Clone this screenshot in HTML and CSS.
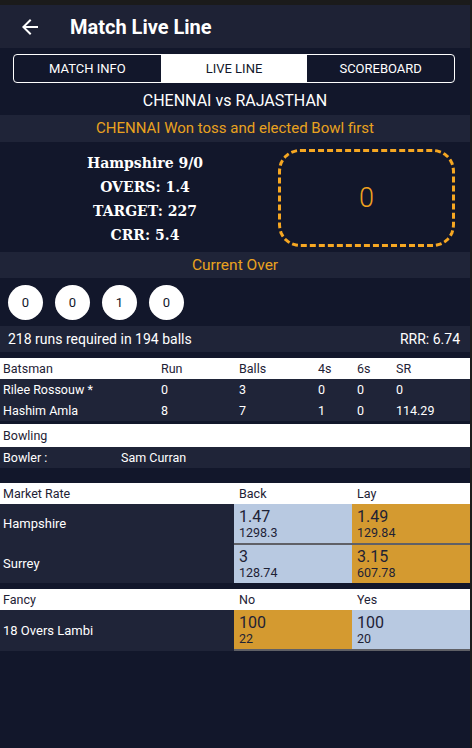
FILE: index.html
```html
<!DOCTYPE html>
<html>
<head>
<meta charset="utf-8">
<link rel="stylesheet" href="styles.css">
</head>
<body>
<div class="app">
  <header class="topbar">
    <svg class="back-icon" viewBox="0 0 24 24" width="24" height="24"><path fill="#fff" d="M20 11H7.83l5.59-5.59L12 4l-8 8 8 8 1.41-1.41L7.83 13H20v-2z"/></svg>
    <h1 class="title">Match Live Line</h1>
  </header>

  <nav class="tabs">
    <div class="tab">MATCH INFO</div>
    <div class="tab active">LIVE LINE</div>
    <div class="tab">SCOREBOARD</div>
  </nav>

  <div class="match-name">CHENNAI vs RAJASTHAN</div>
  <div class="bar toss">CHENNAI Won toss and elected Bowl first</div>

  <section class="score">
    <div class="score-info">
      <div>Hampshire 9/0</div>
      <div>OVERS: 1.4</div>
      <div>TARGET: 227</div>
      <div>CRR: 5.4</div>
    </div>
    <div class="ball-box">0</div>
  </section>

  <div class="bar over-title">Current Over</div>
  <div class="balls">
    <span class="ball">0</span>
    <span class="ball">0</span>
    <span class="ball">1</span>
    <span class="ball">0</span>
  </div>
  <div class="bar required">
    <span>218 runs required in 194 balls</span>
    <span>RRR: 6.74</span>
  </div>

  <div class="tbl bat">
    <div class="row head"><span>Batsman</span><span>Run</span><span>Balls</span><span>4s</span><span>6s</span><span>SR</span></div>
    <div class="row"><span>Rilee Rossouw *</span><span>0</span><span>3</span><span>0</span><span>0</span><span>0</span></div>
    <div class="row"><span>Hashim Amla</span><span>8</span><span>7</span><span>1</span><span>0</span><span>114.29</span></div>
  </div>

  <div class="tbl bowl">
    <div class="row head"><span>Bowling</span></div>
    <div class="row"><span>Bowler :</span><span>Sam Curran</span></div>
  </div>

  <div class="tbl market">
    <div class="row head"><span>Market Rate</span><span>Back</span><span>Lay</span></div>
    <div class="row odds">
      <span class="team">Hampshire</span>
      <div class="cell back"><b>1.47</b><small>1298.3</small></div>
      <div class="cell lay"><b>1.49</b><small>129.84</small></div>
    </div>
    <div class="row odds">
      <span class="team">Surrey</span>
      <div class="cell back"><b>3</b><small>128.74</small></div>
      <div class="cell lay"><b>3.15</b><small>607.78</small></div>
    </div>
  </div>

  <div class="tbl fancy">
    <div class="row head"><span>Fancy</span><span>No</span><span>Yes</span></div>
    <div class="row odds">
      <span class="team">18 Overs Lambi</span>
      <div class="cell lay"><b>100</b><small>22</small></div>
      <div class="cell back"><b>100</b><small>20</small></div>
    </div>
  </div>
</div>
</body>
</html>
```

FILE: styles.css
```css
html {
  background: #1b1b1b;
}
body {
  margin: 5px 2px 0 0;
  font-family: Roboto, "Liberation Sans", sans-serif;
  color: #fff;
}
.app {
  background: #12172b;
  min-height: 743px;
}
.topbar {
  height: 43px;
  background: #1e2235;
  display: flex;
  align-items: center;
  padding-left: 18px;
}
.back-icon {
  display: block;
}
.title {
  margin: 0 0 0 28px;
  font-size: 20px;
  font-weight: 700;
}
.tabs {
  margin: 6px 15px 0 13px;
  height: 27px;
  border: 1px solid #fff;
  border-radius: 4px;
  display: grid;
  grid-template-columns: 1fr 1fr 1fr;
  overflow: hidden;
  background: #12172b;
}
.tab {
  display: flex;
  align-items: center;
  justify-content: center;
  font-size: 13px;
  color: #fff;
}
.tab.active {
  background: #fff;
  color: #12172b;
}
.match-name {
  text-align: center;
  font-size: 16px;
  height: 32px;
  line-height: 36px;
}
.bar {
  background: #1f2438;
}
.toss {
  height: 27px;
  line-height: 27px;
  text-align: center;
  color: #e9a21f;
  font-size: 15px;
}
.score {
  display: grid;
  grid-template-columns: 1fr 177px;
  padding: 7px 15px 9px 0;
  height: 94px;
}
.score-info {
  padding-left: 12px;
  text-align: center;
  font-family: "DejaVu Serif", serif;
  font-weight: 700;
  font-size: 14px;
  line-height: 24px;
  padding-top: 2px;
}
.ball-box {
  border: 3px dashed #f6a722;
  border-radius: 22px;
  display: flex;
  align-items: center;
  justify-content: center;
  color: #f0a21f;
  font-size: 27px;
  font-weight: 300;
}
.over-title {
  height: 26px;
  line-height: 27px;
  text-align: center;
  color: #e9a21f;
  font-size: 15.5px;
}
.balls {
  display: flex;
  gap: 12px;
  padding: 7px 8px 6px;
}
.ball {
  width: 35px;
  height: 35px;
  border-radius: 50%;
  background: #fff;
  color: #12172b;
  font-size: 13px;
  display: flex;
  align-items: center;
  justify-content: center;
}
.required {
  height: 26px;
  display: flex;
  align-items: center;
  justify-content: space-between;
  padding: 0 10px 0 8px;
  font-size: 14px;
}
.tbl {
  margin-top: 6px;
  font-size: 12.5px;
}
.row {
  display: grid;
  background: #1f2438;
  color: #fff;
  align-items: center;
}
.row > span {
  padding-left: 3px;
}
.row.head {
  background: #fff;
  color: #1e2235;
}
.bat .row {
  grid-template-columns: 158px 78px 79px 39px 39px 1fr;
  height: 21px;
}
.bowl {
  margin-top: 3px;
}
.bowl .row {
  grid-template-columns: 118px 1fr;
  height: 21px;
}
.bowl .row.head {
  height: 23px;
  grid-template-columns: 1fr;
}
.market {
  margin-top: 15px;
}
.market .row,
.fancy .row {
  grid-template-columns: 234px 118px 118px;
}
.market .row.head > span + span,
.fancy .row.head > span + span {
  padding-left: 5px;
}
.market .row.head,
.fancy .row.head {
  height: 21px;
}
.row.odds {
  height: 39px;
  align-items: stretch;
}
.row.odds + .row.odds {
  height: 40px;
}
.row.odds + .row.odds .cell {
  border-top: 2px solid #5f6066;
}
.team {
  display: flex;
  align-items: center;
  font-size: 13px;
}
.cell {
  display: flex;
  flex-direction: column;
  justify-content: center;
  padding-left: 5px;
  color: #1e2235;
}
.cell b {
  font-weight: 400;
  font-size: 16px;
  line-height: 17px;
}
.cell small {
  font-size: 12.5px;
  line-height: 15px;
}
.cell.back {
  background: #b8c9e1;
}
.cell.lay {
  background: #d49a30;
}
.fancy {
  margin-top: 6px;
}
.fancy .row.odds {
  height: 41px;
}
.fancy .row.odds .cell {
  border-bottom: 2px solid #5f6066;
}
```
